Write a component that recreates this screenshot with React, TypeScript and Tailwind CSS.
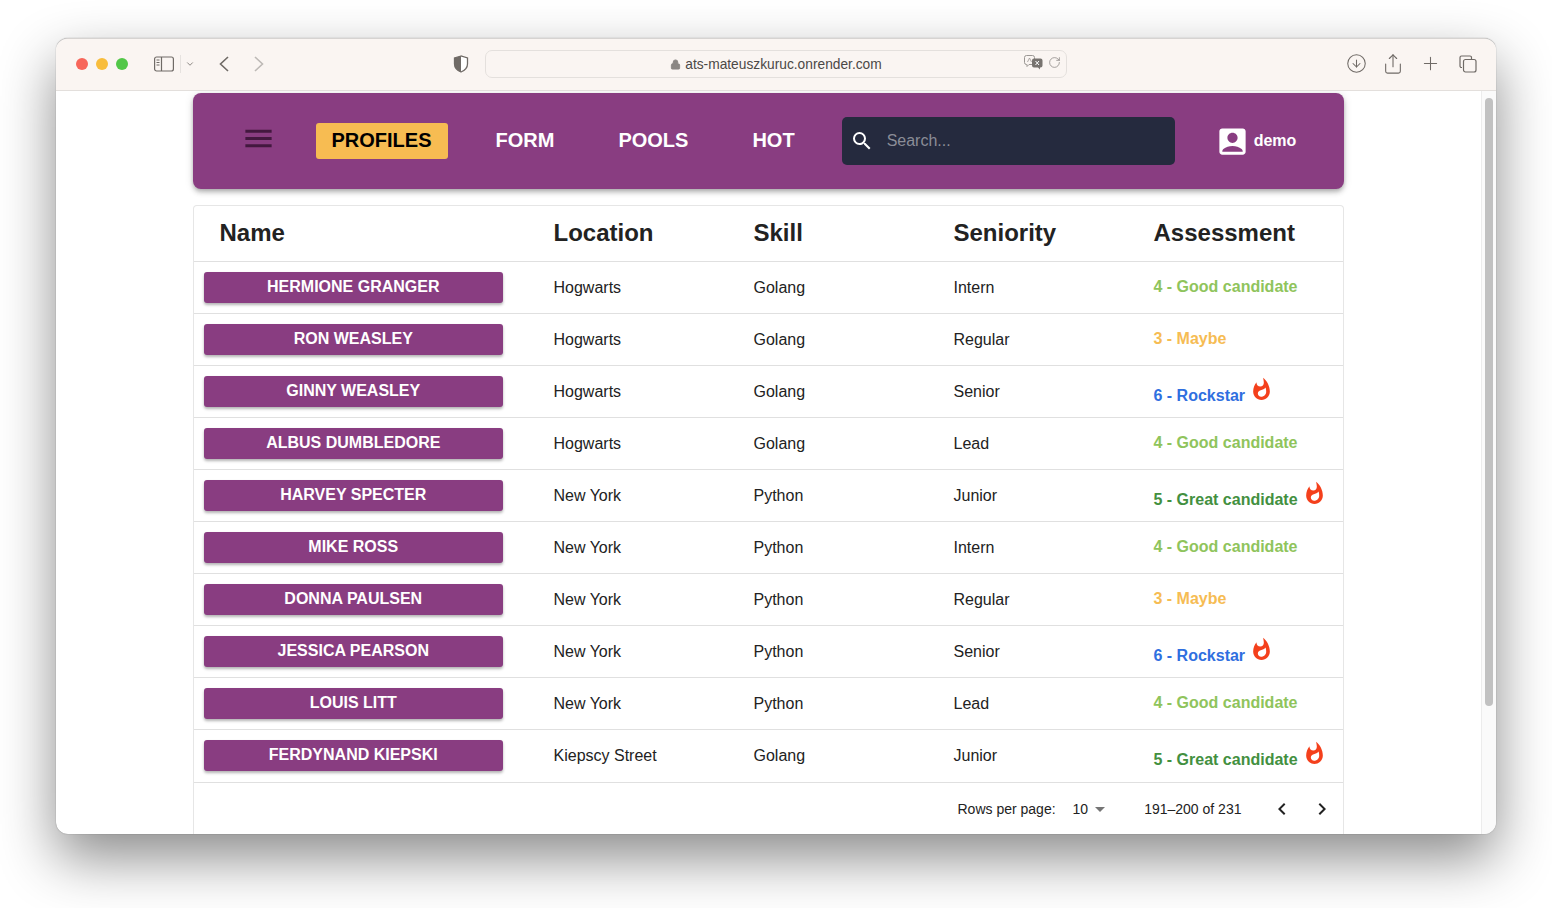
import { ChevronDown, Lock, Plus, RotateCw, ArrowDownCircleIcon, Share } from 'lucide-react';
import {
  MdAccountBox,
  MdArrowDropDown,
  MdKeyboardArrowLeft,
  MdKeyboardArrowRight,
  MdMenu,
  MdWhatshot,
  MdSearch
} from 'react-icons/md';

type Row = {
  name: string;
  location: string;
  skill: string;
  seniority: string;
  score: 3 | 4 | 5 | 6;
};

const ROWS: Row[] = [
  { name: 'HERMIONE GRANGER', location: 'Hogwarts', skill: 'Golang', seniority: 'Intern', score: 4 },
  { name: 'RON WEASLEY', location: 'Hogwarts', skill: 'Golang', seniority: 'Regular', score: 3 },
  { name: 'GINNY WEASLEY', location: 'Hogwarts', skill: 'Golang', seniority: 'Senior', score: 6 },
  { name: 'ALBUS DUMBLEDORE', location: 'Hogwarts', skill: 'Golang', seniority: 'Lead', score: 4 },
  { name: 'HARVEY SPECTER', location: 'New York', skill: 'Python', seniority: 'Junior', score: 5 },
  { name: 'MIKE ROSS', location: 'New York', skill: 'Python', seniority: 'Intern', score: 4 },
  { name: 'DONNA PAULSEN', location: 'New York', skill: 'Python', seniority: 'Regular', score: 3 },
  { name: 'JESSICA PEARSON', location: 'New York', skill: 'Python', seniority: 'Senior', score: 6 },
  { name: 'LOUIS LITT', location: 'New York', skill: 'Python', seniority: 'Lead', score: 4 },
  { name: 'FERDYNAND KIEPSKI', location: 'Kiepscy Street', skill: 'Golang', seniority: 'Junior', score: 5 }
];

const ASSESSMENT = {
  3: { label: '3 - Maybe', color: 'text-[#f6bc53]', hot: false },
  4: { label: '4 - Good candidate', color: 'text-[#8fc45c]', hot: false },
  5: { label: '5 - Great candidate', color: 'text-[#43903f]', hot: true },
  6: { label: '6 - Rockstar', color: 'text-[#2f6fe0]', hot: true }
};

function TrafficLights() {
  return (
    <div className="flex items-center gap-[8px]">
      <span className="h-[12px] w-[12px] rounded-full bg-[#f7665a]" />
      <span className="h-[12px] w-[12px] rounded-full bg-[#f8bd3c]" />
      <span className="h-[12px] w-[12px] rounded-full bg-[#52c748]" />
    </div>
  );
}

function SidebarIcon() {
  return (
    <svg width="20" height="16" viewBox="0 0 20 16" fill="none" stroke="#6f6a66" strokeWidth="1.2">
      <rect x="0.6" y="1" width="18.8" height="14" rx="2" />
      <path d="M7.5 1v14" />
      <path d="M2.5 4h3M2.5 6.5h3M2.5 9h3" strokeWidth="1" />
    </svg>
  );
}

function NavChevron({ dir, color }: { dir: 'left' | 'right'; color: string }) {
  return (
    <svg width="10" height="16" viewBox="0 0 10 16" fill="none" stroke={color} strokeWidth="1.6">
      <path d={dir === 'left' ? 'M9 1 1.500 8 9 15' : 'M1 1l7.500 7L1 15'} />
    </svg>
  );
}

function ShieldIcon() {
  return (
    <svg width="16" height="18" viewBox="0 0 16 18">
      <path d="M8 1 1.500 3v6c0 4 3 6.500 6.500 8 3.500-1.500 6.500-4 6.500-8V3L8 1Z" fill="#fff" stroke="#6f6a66" strokeWidth="1.300" />
      <path d="M8 1 1.500 3v6c0 4 3 6.500 6.500 8V1Z" fill="#6f6a66" />
    </svg>
  );
}

function TranslateIcon() {
  return (
    <svg width="19" height="15" viewBox="0 0 19 15">
      <path d="M2.500.500h6a2 2 0 0 1 2 2v5a2 2 0 0 1-2 2H5l-2 2V9.500h-.5a2 2 0 0 1-2-2v-5a2 2 0 0 1 2-2Z" fill="#faf5f2" stroke="#9a9693" />
      <path d="M3.500 7l2-4 2 4" fill="none" stroke="#9a9693" strokeWidth="0.800" />
      <path d="M10 3.500h6.500a2 2 0 0 1 2 2v5a2 2 0 0 1-2 2H16v2l-2-2h-4a2 2 0 0 1-2-2v-5a2 2 0 0 1 2-2Z" fill="#77736f" />
      <path d="M11.500 6l3.500 4M15 6l-3.500 4" stroke="#fff" strokeWidth="1" />
    </svg>
  );
}

function TabsIcon() {
  return (
    <svg width="18" height="18" viewBox="0 0 18 18" fill="none" stroke="#6f6a66" strokeWidth="1.200">
      <path d="M3 12.500h-.5A1.500 1.500 0 0 1 1 11V2.500A1.500 1.500 0 0 1 2.500 1H11a1.500 1.500 0 0 1 1.500 1.500V4" />
      <rect x="4.500" y="4.500" width="12.500" height="12.500" rx="2" />
    </svg>
  );
}

function BrowserToolbar() {
  return (
    <div className="flex h-[52px] shrink-0 items-center border-b border-[#e3dfdc] bg-[#faf5f2] pb-[2px] pl-[20px] pr-[19px]">
      <TrafficLights />
      <div className="ml-[26px] flex items-center">
        <SidebarIcon />
        <span className="ml-[6px] h-[18px] w-px bg-[#e6e2df]" />
        <ChevronDown size={10} strokeWidth={2} className="ml-[4px] text-[#77726e]" />
      </div>
      <div className="ml-[24px]">
        <NavChevron dir="left" color="#6f6a66" />
      </div>
      <div className="ml-[25px]">
        <NavChevron dir="right" color="#bdb9b6" />
      </div>
      <div className="ml-[189px]">
        <ShieldIcon />
      </div>
      <div className="relative ml-[16px] flex h-[28px] w-[582px] items-center justify-center rounded-[7px] border border-[#e4e0dd] text-[13.750px] text-[#4b4846]">
        <Lock size={11} fill="#8b8784" strokeWidth={2} className="mr-[4px] mt-[2px] text-[#8b8784]" />
        <span className="mt-[3px]">ats-mateuszkuruc.onrender.com</span>
        <div className="absolute right-[5px] top-[4px] flex items-center gap-[5px]">
          <TranslateIcon />
          <RotateCw size={13} strokeWidth={1.400} className="text-[#8b8784]" />
        </div>
      </div>
      <div className="ml-auto flex items-center text-[#6f6a66]">
        <ArrowDownCircleIcon size={21} strokeWidth={1.200} />
        <Share size={22} strokeWidth={1.200} className="ml-[15px]" />
        <Plus size={21} strokeWidth={1.200} className="ml-[16px]" />
        <div className="ml-[18px]">
          <TabsIcon />
        </div>
      </div>
    </div>
  );
}

function AppBar() {
  return (
    <header className="ml-[136.500px] mt-[2px] flex h-[96px] w-[1151.500px] items-center rounded-[8px] bg-[#893d81] shadow-[0_2px_4px_-1px_rgba(0,0,0,0.2),0_4px_5px_0_rgba(0,0,0,0.14),0_1px_10px_0_rgba(0,0,0,0.12)]">
      <MdMenu size={35} className="mb-[5px] ml-[48px] text-[#43183f]" />
      <div className="ml-[40px] flex h-[36px] w-[132px] items-center justify-center rounded-[3px] bg-[#f7bc52] pb-[2px] text-[20px] font-bold text-black">
        PROFILES
      </div>
      <span className="mb-[2px] ml-[48px] text-[20px] font-bold text-white">FORM</span>
      <span className="mb-[2px] ml-[64px] text-[20px] font-bold text-white">POOLS</span>
      <span className="mb-[2px] ml-[64px] text-[20px] font-bold text-white">HOT</span>
      <div className="ml-[47px] flex h-[48px] w-[333px] items-center rounded-[5px] bg-[#252a3e] pl-[8px]">
        <MdSearch size={24} className="text-white" />
        <span className="ml-[13px] text-[16px] text-[#8b8d97]">Search...</span>
      </div>
      <MdAccountBox size={35} className="ml-[40px] text-white" />
      <span className="ml-[4px] text-[16px] font-bold text-white">demo</span>
    </header>
  );
}

function Assessment({ score }: { score: Row['score'] }) {
  const item = ASSESSMENT[score];
  if (!item.hot) {
    return <span className={`pb-[2px] text-[16px] font-bold ${item.color}`}>{item.label}</span>;
  }
  return (
    <div className="flex items-start">
      <span className={`mt-[9px] text-[16px] font-bold ${item.color}`}>{item.label}</span>
      <MdWhatshot size={25} className="mt-[2px] ml-[4px] text-[#f4401c]" />
    </div>
  );
}

function ProfilesTable() {
  return (
    <section className="ml-[136.500px] mt-[16px] w-[1151.500px] rounded-t-[4px] border border-b-0 border-[#e6e6e6] text-[16px] text-[#222222]">
      <div className="grid h-[56px] grid-cols-[360px_200px_200px_200px_1fr] items-center border-b border-[#e0e0e0] pb-[2px] text-[24px] font-bold">
        <span className="pl-[26px]">Name</span>
        <span>Location</span>
        <span>Skill</span>
        <span>Seniority</span>
        <span>Assessment</span>
      </div>
      {ROWS.map((row, i) => (
        <div
          key={row.name}
          className={`grid grid-cols-[360px_200px_200px_200px_1fr] items-center border-b border-[#e0e0e0] ${
            i === ROWS.length - 1 ? 'h-[53px] pb-[1px]' : 'h-[52px]'
          }`}
        >
          <div className="pl-[10px]">
            <div className="flex h-[31px] w-[299.500px] items-center justify-center rounded-[3px] bg-[#893d81] pb-[2px] text-[16px] font-bold text-white shadow-[0_2px_3px_rgba(0,0,0,0.3)]">
              {row.name}
            </div>
          </div>
          <span>{row.location}</span>
          <span>{row.skill}</span>
          <span>{row.seniority}</span>
          <Assessment score={row.score} />
        </div>
      ))}
      <div className="flex h-[52px] items-center pl-[764px] text-[14px] text-[#222222]">
        <span>Rows per page:</span>
        <span className="ml-[17px]">10</span>
        <MdArrowDropDown size={24} className="text-[#757575]" />
        <span className="ml-[32px]">191–200 of 231</span>
        <MdKeyboardArrowLeft size={24} className="ml-[29px]" />
        <MdKeyboardArrowRight size={24} className="ml-[16px]" />
      </div>
    </section>
  );
}

export default function App() {
  return (
    <div className="h-[908px] w-[1552px] overflow-hidden bg-white pl-[56px] pt-[38px] font-['Liberation_Sans',Arial,sans-serif]">
      <div className="flex h-[796px] w-[1440px] flex-col overflow-hidden rounded-[12px] border-t border-[#d6d3d1] bg-white shadow-[0_0_1px_rgba(0,0,0,0.5),0_24px_56px_0_rgba(0,0,0,0.46)]">
        <BrowserToolbar />
        <div className="flex min-h-0 flex-1">
          <main className="min-w-0 flex-1 overflow-hidden">
            <AppBar />
            <ProfilesTable />
          </main>
          <div className="w-[15px] shrink-0 border-l border-[#ececec] bg-[#fafafa] px-[3px] pt-[7px]">
            <div className="h-[608px] rounded-full bg-[#c1c1c1]" />
          </div>
        </div>
      </div>
    </div>
  );
}
